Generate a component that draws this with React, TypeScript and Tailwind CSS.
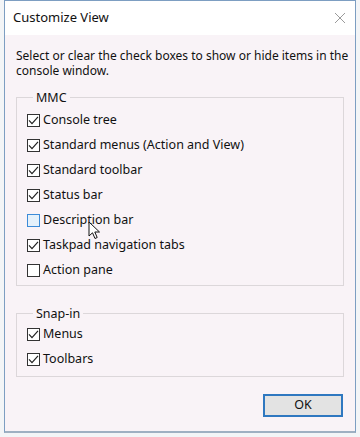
const FONT = { fontFamily: '"Noto Sans", "Open Sans", sans-serif' };

const Check = ({ checked, hover }: { checked: boolean; hover?: boolean }) => (
  <span
    className={`flex h-[13px] w-[13px] shrink-0 items-center justify-center border ${
      hover ? "border-[#3c8bd8] bg-[#e5f1fb]" : "border-[#333333] bg-white"
    }`}
  >
    {checked && (
      <svg width="11" height="11" viewBox="0 0 11 11">
        <path d="M1 5.3 L4 8.6 L10 1.8" fill="none" stroke="#222" strokeWidth="1.2" />
      </svg>
    )}
  </span>
);

const Row = ({ label, checked, hover }: { label: string; checked: boolean; hover?: boolean }) => (
  <div className="flex h-[25px] items-center gap-[3px]">
    <Check checked={checked} hover={hover} />
    <span className="text-[12.5px] leading-none text-[#111111]">{label}</span>
  </div>
);

const mmc = [
  { label: "Console tree", checked: true },
  { label: "Standard menus (Action and View)", checked: true },
  { label: "Standard toolbar", checked: true },
  { label: "Status bar", checked: true },
  { label: "Description bar", checked: false, hover: true },
  { label: "Taskpad navigation tabs", checked: true },
  { label: "Action pane", checked: false },
];

export default function App() {
  return (
    <div className="relative h-[437px] w-[360px] bg-[#f3f5f7] pl-[4px] pr-[4px] pb-[4px]" style={FONT}>
      <div className="flex h-[433px] flex-col border border-b-2 border-[#7d9ec2] border-b-[#9fb0c2] bg-[#f9f3f7]">
        <div className="flex h-[34px] shrink-0 items-center justify-between bg-white pl-[8px] pr-[9px]">
          <span className="text-[13px] text-[#111111]">Customize View</span>
          <svg width="12" height="12" viewBox="0 0 12 12">
            <path d="M1 1 L11 11 M11 1 L1 11" stroke="#9a9a9a" strokeWidth="1" />
          </svg>
        </div>
        <div className="flex flex-1 flex-col px-[11px]">
          <p className="mt-[13px] whitespace-nowrap text-[12px] leading-[15px] text-[#111111]">
            Select or clear the check boxes to show or hide items in the
            <br />
            console window.
          </p>
          <fieldset className="mt-[12px] border border-[#dcd7da] pb-[2px] pl-[10px]">
            <legend className="ml-[6px] px-[3px] text-[12.5px] leading-[15px] text-[#111111]">MMC</legend>
            <div className="mt-[3px] flex flex-col">
              {mmc.map((r) => (
                <Row key={r.label} {...r} />
              ))}
            </div>
          </fieldset>
          <fieldset className="mt-[20px] border border-[#dcd7da] pb-[4px] pl-[10px]">
            <legend className="ml-[6px] px-[3px] text-[12.5px] leading-[15px] text-[#111111]">Snap-in</legend>
            <div className="mt-[1px] flex flex-col">
              <Row label="Menus" checked />
              <Row label="Toolbars" checked />
            </div>
          </fieldset>
          <div className="mt-[17px] flex justify-end pr-[1px]">
            <button className="flex h-[23px] w-[80px] items-center justify-center border-2 border-[#2f78c0] bg-[#e3e3e3] text-[12.5px] text-[#111111]">
              OK
            </button>
          </div>
        </div>
      </div>
      <svg className="absolute left-[88px] top-[221px]" width="14" height="20" viewBox="0 0 14 20">
        <path d="M1 1 L1 15 L4.5 11.8 L7 17.5 L9.2 16.5 L6.8 11 L11.5 11 Z" fill="white" stroke="#111" strokeWidth="1" strokeLinejoin="round" />
      </svg>
    </div>
  );
}
